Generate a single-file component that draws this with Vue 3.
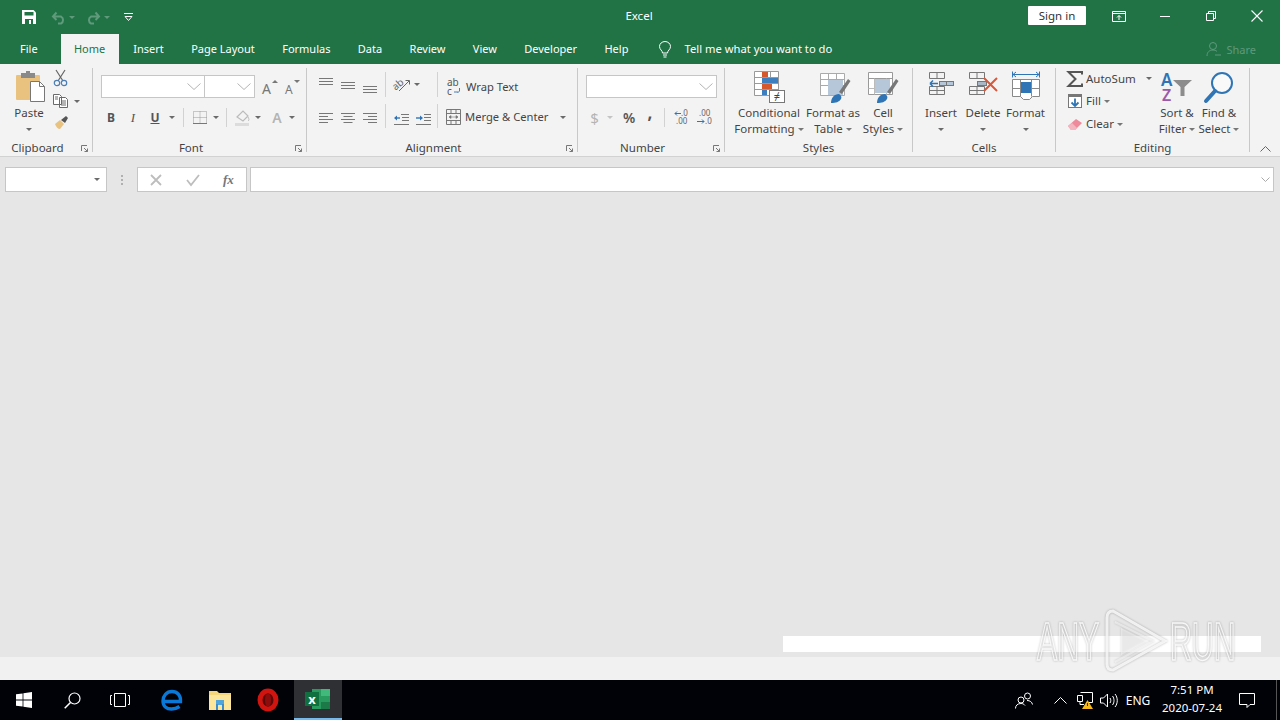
<script setup>
const tabs = ['Insert', 'Page Layout', 'Formulas', 'Data', 'Review', 'View', 'Developer', 'Help']
</script>

<template>
  <div class="app">
    <div class="titlebar">
      <div class="qat">
        <svg class="save" width="16" height="16" viewBox="0 0 16 16">
          <path d="M1 1h11.500L15 3.500V15H1z" fill="#fff" />
          <rect x="3.500" y="3" width="9" height="3.500" fill="#217346" />
          <rect x="4" y="10" width="8" height="5" fill="#217346" />
          <rect x="8" y="11" width="2" height="4" fill="#fff" />
        </svg>
        <svg class="undo" width="16" height="14" viewBox="0 0 16 14">
          <path d="M2 6.500h8a4 4 0 0 1 0 7H7M5.500 2.500 2 6.500l3.500 3.500" fill="none" stroke="#5f9a7b" stroke-width="2" />
        </svg>
        <i class="caret dim"></i>
        <svg class="redo" width="16" height="14" viewBox="0 0 16 14">
          <path d="M14 6.500H6a4 4 0 0 0 0 7h3M10.500 2.500 14 6.500 10.500 10" fill="none" stroke="#5f9a7b" stroke-width="2" />
        </svg>
        <i class="caret dim"></i>
        <svg class="custom" width="9" height="8" viewBox="0 0 9 8">
          <path d="M0 .5h9" stroke="#fff" />
          <path d="M1 3.500h7L4.500 7.500z" fill="none" stroke="#fff" />
        </svg>
      </div>
      <div class="doc-title">Excel</div>
      <div class="win-area">
        <button class="signin">Sign in</button>
        <div class="win-btns">
          <span class="win-btn">
            <svg width="14" height="11" viewBox="0 0 14 11"><path d="M.5.500h13v10H.5zM.5 2.500h13M7 9V4.500M5 6.500l2-2 2 2" fill="none" stroke="#fff" /></svg>
          </span>
          <span class="win-btn">
            <svg width="10" height="1" viewBox="0 0 10 1"><path d="M0 .5h10" stroke="#fff" /></svg>
          </span>
          <span class="win-btn">
            <svg width="10" height="10" viewBox="0 0 10 10"><path d="M.5 2.500h7v7h-7zM2.500 2.500v-2h7v7h-2" fill="none" stroke="#fff" /></svg>
          </span>
          <span class="win-btn">
            <svg width="12" height="12" viewBox="0 0 12 12"><path d="M.5.500l11 11M11.500.500l-11 11" fill="none" stroke="#fff" stroke-width="1.100" /></svg>
          </span>
        </div>
      </div>
    </div>

    <div class="tabbar">
      <span class="tab file">File</span>
      <span class="tab active">Home</span>
      <span v-for="t in tabs" :key="t" class="tab">{{ t }}</span>
      <svg class="bulb" width="14" height="17" viewBox="0 0 14 17">
        <path d="M4.500 12c0-2.500-3-3.500-3-6.500a5.500 5 0 0 1 11 0c0 3-3 4-3 6.500zM5 14h4M5.500 16h3" fill="none" stroke="#fff" />
      </svg>
      <span class="tell">Tell me what you want to do</span>
      <div class="share">
        <svg width="16" height="16" viewBox="0 0 16 16">
          <circle cx="7" cy="5" r="3.500" fill="none" stroke="#5f9a7b" />
          <path d="M1 15c0-4 2.500-6 6-6 1.500 0 3 .4 4 1.500M9 14h6" fill="none" stroke="#5f9a7b" />
        </svg>
        <span>Share</span>
      </div>
    </div>

    <div class="ribbon">
      <section class="group g-clip">
        <div class="body clip-body">
          <div class="big paste">
            <svg width="32" height="32" viewBox="0 0 32 32">
              <rect x="1" y="4" width="24" height="25" rx="1" fill="#e9c27f" />
              <rect x="6" y="2" width="14" height="5" fill="#8a8a8a" />
              <rect x="11" y="0" width="4" height="3" fill="#8a8a8a" />
              <path d="M15.500 10.500h9l5 5v15h-14z" fill="#fff" stroke="#777" />
              <path d="M24.500 10.500v5h5" fill="none" stroke="#777" />
            </svg>
            <span class="lbl">Paste</span>
            <span class="lbl"><i class="caret"></i></span>
          </div>
          <div class="clip-small">
            <svg width="16" height="17" viewBox="0 0 16 17">
              <path d="M3 0l7 11M12 0 5 11" stroke="#666" stroke-width="1.200" fill="none" />
              <circle cx="4" cy="13" r="2.700" fill="none" stroke="#4a7eb5" stroke-width="1.200" />
              <circle cx="11" cy="13" r="2.700" fill="none" stroke="#4a7eb5" stroke-width="1.200" />
            </svg>
            <div class="copy-row">
              <svg width="16" height="14" viewBox="0 0 16 14">
                <path d="M.5.500h6l2 2v8h-8zM6.500 3.500h6l2 2v8h-8z" fill="#fff" stroke="#6a6a6a" />
                <path d="M8 7h5M8 9h5M8 11h5M2 3h3M2 5h3" stroke="#6a6a6a" />
              </svg>
              <i class="caret"></i>
            </div>
            <svg width="16" height="15" viewBox="0 0 16 15">
              <path d="M2 9l5-4 4 4-4 5c-2 0-4-2-5-5z" fill="#e9c27f" />
              <path d="M8 5l5-4 2 2-3 5z" fill="#555" />
            </svg>
          </div>
        </div>
        <div class="foot"><span class="foot-label">Clipboard</span><span class="launch"><svg width="7" height="7" viewBox="0 0 7 7"><path d="M.5 6V.5H6M3 3l3.500 3.500M6.500 3.500v3h-3" fill="none" stroke="#777" /></svg></span></div>
      </section>

      <section class="group g-font">
        <div class="body stack">
          <div class="row-a">
            <div class="combo font-name"><svg class="chev" width="14" height="7" viewBox="0 0 14 7"><path d="M.5.500 7 6.500 13.500.500" fill="none" stroke="#b5b5b5" /></svg></div>
            <div class="combo font-size"><svg class="chev" width="14" height="7" viewBox="0 0 14 7"><path d="M.5.500 7 6.500 13.500.500" fill="none" stroke="#b5b5b5" /></svg></div>
            <svg class="grow-a" width="16" height="16" viewBox="0 0 16 16">
              <text x="0" y="15" class="glyph" font-size="14" fill="#777">A</text>
              <path d="M10 4l3-3 3 3z" fill="#777" />
            </svg>
            <svg class="shrink-a" width="16" height="16" viewBox="0 0 16 16">
              <text x="1" y="15" class="glyph" font-size="12" fill="#777">A</text>
              <path d="M10 1h6l-3 3z" fill="#777" />
            </svg>
          </div>
          <div class="row-b">
            <span class="ch bold">B</span>
            <span class="ch ital">I</span>
            <span class="ch under">U</span>
            <i class="caret slot12"></i>
            <i class="sep"></i>
            <svg width="22" height="19" viewBox="0 0 22 19">
              <path d="M4.500 3.500h13v12h-13zM11 3.500v12M4.500 9.500h13" fill="none" stroke="#999" stroke-dasharray="1 1" />
              <path d="M4 15.500h14" stroke="#777" />
            </svg>
            <i class="caret slot10"></i>
            <i class="sep"></i>
            <svg width="21" height="19" viewBox="0 0 21 19">
              <path d="M5 9l6-6 5 5-5 5z" fill="none" stroke="#bbb" stroke-width="1.200" />
              <path d="M16 9c1 2 1.500 3 0 4" fill="none" stroke="#bbb" />
              <rect x="3" y="15" width="14" height="3" fill="#dcdcdc" />
            </svg>
            <i class="caret slot10"></i>
            <span class="ch a-color">A</span>
            <i class="caret slot9"></i>
          </div>
        </div>
        <div class="foot"><span class="foot-label">Font</span><span class="launch"><svg width="7" height="7" viewBox="0 0 7 7"><path d="M.5 6V.5H6M3 3l3.500 3.500M6.500 3.500v3h-3" fill="none" stroke="#777" /></svg></span></div>
      </section>

      <section class="group g-align">
        <div class="body align-body">
          <div class="align-grid">
            <svg width="22" height="20" viewBox="0 0 22 20"><path d="M4 3.500h14M4 6.500h14M4 9.500h14" stroke="#777" /></svg>
            <svg width="22" height="20" viewBox="0 0 22 20"><path d="M4 7.500h14M4 10.500h14M4 13.500h14" stroke="#777" /></svg>
            <svg width="22" height="20" viewBox="0 0 22 20"><path d="M4 11.500h14M4 14.500h14M4 17.500h14" stroke="#777" /></svg>
            <svg width="22" height="20" viewBox="0 0 22 20"><path d="M4 5.500h14M4 8.500h9M4 11.500h14M4 14.500h9" stroke="#777" /></svg>
            <svg width="22" height="20" viewBox="0 0 22 20"><path d="M4 5.500h14M6.500 8.500h9M4 11.500h14M6.500 14.500h9" stroke="#777" /></svg>
            <svg width="22" height="20" viewBox="0 0 22 20"><path d="M4 5.500h14M9 8.500h9M4 11.500h14M9 14.500h9" stroke="#777" /></svg>
          </div>
          <i class="vsep"></i>
          <div class="align-mid">
            <div class="orient">
              <svg width="18" height="16" viewBox="0 0 18 16">
                <text x="0" y="12" class="glyph" font-size="10" fill="#666" transform="rotate(-40 5 10)">ab</text>
                <path d="M6 15 16 5M12.500 4.500h4v4" fill="none" stroke="#666" />
              </svg>
              <i class="caret"></i>
            </div>
            <div class="indents">
              <svg width="17" height="15" viewBox="0 0 17 15">
                <path d="M8 3.500h8M9 6.500h7M9 9.500h7M1 13.500h15" fill="none" stroke="#777" />
                <path d="M1 7l3-2.500v5z" fill="#2f75b5" /><path d="M2 7h5" stroke="#2f75b5" stroke-width="1.400" />
              </svg>
              <svg width="17" height="15" viewBox="0 0 17 15">
                <path d="M9 3.500h7M9 6.500h7M9 9.500h7M1 13.500h15" fill="none" stroke="#777" />
                <path d="M8 7 5 4.500v5z" fill="#2f75b5" /><path d="M1 7h5" stroke="#2f75b5" stroke-width="1.400" />
              </svg>
            </div>
          </div>
          <i class="vsep wide"></i>
          <div class="align-text">
            <div class="wrap-row">
              <svg width="14" height="18" viewBox="0 0 14 18">
                <text x="0" y="8" class="glyph" font-size="10" fill="#555">ab</text>
                <text x="0" y="17" class="glyph" font-size="10" fill="#555">c</text>
                <path d="M7 14h4M12.500 10v3l-2 2" fill="none" stroke="#4a7eb5" />
              </svg>
              <span class="lbl">Wrap Text</span>
            </div>
            <div class="merge-row">
              <svg width="15" height="16" viewBox="0 0 15 16">
                <path d="M.5.500h14v15H.5zM.5 4.500h14M.5 11.500h14M5 .5v4M10 .5v4M5 11.500v4M10 11.500v4" fill="none" stroke="#777" />
                <path d="M3 8h9M3 8l2-1.500v3zM12 8l-2-1.500v3z" fill="#777" stroke="#777" stroke-width=".6" />
              </svg>
              <span class="lbl">Merge &amp; Center</span>
              <i class="caret"></i>
            </div>
          </div>
        </div>
        <div class="foot"><span class="foot-label">Alignment</span><span class="launch"><svg width="7" height="7" viewBox="0 0 7 7"><path d="M.5 6V.5H6M3 3l3.500 3.500M6.500 3.500v3h-3" fill="none" stroke="#777" /></svg></span></div>
      </section>

      <section class="group g-number">
        <div class="body stack">
          <div class="row-a">
            <div class="combo num-format"><svg class="chev" width="14" height="7" viewBox="0 0 14 7"><path d="M.5.500 7 6.500 13.500.500" fill="none" stroke="#b5b5b5" /></svg></div>
          </div>
          <div class="row-b num-row">
            <span class="ch dollar">$</span>
            <i class="caret slot16 pale"></i>
            <span class="ch percent">%</span>
            <span class="ch comma">,</span>
            <i class="sep"></i>
            <svg width="22" height="19" viewBox="0 0 22 19">
              <text x="9" y="8" class="glyph" font-size="8" fill="#666">.0</text>
              <text x="4" y="16" class="glyph" font-size="8" fill="#666">.00</text>
              <path d="M3 5.500h6M3 5.500l2-2M3 5.500l2 2" fill="none" stroke="#2f75b5" />
            </svg>
            <svg width="22" height="19" viewBox="0 0 22 19">
              <text x="5" y="8" class="glyph" font-size="8" fill="#666">.00</text>
              <text x="11" y="16" class="glyph" font-size="8" fill="#666">.0</text>
              <path d="M3 13.500h7M10 13.500l-2-2M10 13.500l-2 2" fill="none" stroke="#2f75b5" />
            </svg>
          </div>
        </div>
        <div class="foot"><span class="foot-label">Number</span><span class="launch"><svg width="7" height="7" viewBox="0 0 7 7"><path d="M.5 6V.5H6M3 3l3.500 3.500M6.500 3.500v3h-3" fill="none" stroke="#777" /></svg></span></div>
      </section>

      <section class="group g-styles">
        <div class="body bigs">
          <div class="big w66">
            <svg width="32" height="32" viewBox="0 0 32 32">
              <path d="M1.500.500h24v24h-24zM9.500.500v24M17.500.500v24M1.500 6.500h24M1.500 12.500h24M1.500 18.500h24" fill="#fff" stroke="#999" />
              <rect x="9" y="1" width="6" height="5" fill="#d5572c" />
              <rect x="9" y="7" width="16" height="5" fill="#3d7ebf" />
              <rect x="9" y="13" width="10" height="5" fill="#d5572c" />
              <rect x="9" y="19" width="5" height="5" fill="#3d7ebf" />
              <rect x="16.500" y="19.500" width="15" height="12" fill="#fff" stroke="#777" />
              <text x="24" y="29" class="glyph" font-size="11" fill="#444" text-anchor="middle">≠</text>
            </svg>
            <span class="lbl">Conditional</span>
            <span class="lbl">Formatting<i class="caret ml"></i></span>
          </div>
          <div class="big w54">
            <svg class="nudge" width="32" height="32" viewBox="0 0 32 32">
              <path d="M1.500 2.500h24v22h-24zM9.500 2.500v22M17.500 2.500v22M1.500 8.500h24M1.500 14.500h24" fill="#fff" stroke="#aaa" />
              <rect x="9" y="9" width="15" height="15" fill="#b7c7da" />
              <path d="M20 21 29 8l2.500 2L23 23z" fill="#777" />
              <path d="M12 32c0-5 3-9 8-9 2 1 3 3 2 5-2 3-5 4-10 4z" fill="#2f75b5" />
            </svg>
            <span class="lbl">Format as</span>
            <span class="lbl">Table<i class="caret ml"></i></span>
          </div>
          <div class="big w42">
            <svg width="32" height="32" viewBox="0 0 32 32">
              <path d="M1.500 1.500h24v22h-24zM1.500 7.500h24" fill="#fff" stroke="#999" />
              <path d="M7.500 7.500v16M19.500 7.500v16M1.500 17.500h24" fill="none" stroke="#bbb" />
              <rect x="8" y="8" width="15" height="14" fill="#b7c7da" />
              <path d="M20 21 29 8l2.500 2L23 23z" fill="#777" />
              <path d="M10 32c0-5 3-9 8-9 2 1 3 3 2 5-2 3-5 4-10 4z" fill="#2f75b5" />
            </svg>
            <span class="lbl">Cell</span>
            <span class="lbl">Styles<i class="caret ml"></i></span>
          </div>
        </div>
        <div class="foot"><span class="foot-label">Styles</span></div>
      </section>

      <section class="group g-cells">
        <div class="body bigs">
          <div class="big w42">
            <svg width="32" height="32" viewBox="0 0 32 32">
              <path d="M4.500 1.500h15v6h-15zM12 1.500v6M4.500 23.500h15v-8h-15zM12 15.500v8M4.500 19.500h15" fill="none" stroke="#777" />
              <rect x="14.500" y="10.500" width="7" height="4" fill="#b7c7da" stroke="#777" />
              <rect x="21.500" y="10.500" width="7" height="4" fill="#b7c7da" stroke="#777" />
              <path d="M5 12.500h8M5 12.500l3-3M5 12.500l3 3" fill="none" stroke="#2f75b5" stroke-width="1.500" />
            </svg>
            <span class="lbl">Insert</span>
            <span class="lbl"><i class="caret"></i></span>
          </div>
          <div class="big w42">
            <svg width="32" height="32" viewBox="0 0 32 32">
              <path d="M2.500 1.500h15v6h-15zM10 1.500v6M2.500 23.500h15v-8h-15zM10 15.500v8M2.500 19.500h15" fill="none" stroke="#777" />
              <rect x="10.500" y="10.500" width="9" height="4" fill="#a9b7c7" stroke="#777" />
              <path d="M17 7l13 13M30 7 17 20" stroke="#d9573b" stroke-width="2" />
            </svg>
            <span class="lbl">Delete</span>
            <span class="lbl"><i class="caret"></i></span>
          </div>
          <div class="big w43">
            <svg width="32" height="32" viewBox="0 0 32 32">
              <path d="M3 3.500h26M3 3.500l3-2.500M3 3.500 6 6M29 3.500 26 1M29 3.500 26 6M2.500 .5v6M29.500 .5v6" fill="none" stroke="#2f75b5" />
              <path d="M2.500 8.500h27v17l-7 0-3 3h-6l-3-3h-8zM10.500 8.500v17M21.500 8.500v17M2.500 17.500h27" fill="#fff" stroke="#888" />
              <rect x="11" y="11" width="10" height="11" fill="#2f75b5" />
            </svg>
            <span class="lbl">Format</span>
            <span class="lbl"><i class="caret"></i></span>
          </div>
        </div>
        <div class="foot"><span class="foot-label">Cells</span></div>
      </section>

      <section class="group g-edit">
        <div class="body bigs">
          <div class="edit-small">
            <div class="edit-row">
              <svg width="16" height="16" viewBox="0 0 16 16"><path d="M15 3.500V1H1.500l7 7-7 7H15v-2.500" fill="none" stroke="#555" stroke-width="2" /></svg>
              <span class="lbl">AutoSum</span>
              <i class="caret sum-caret"></i>
            </div>
            <div class="edit-row">
              <svg width="16" height="16" viewBox="0 0 16 16">
                <rect x="1.500" y="1.500" width="13" height="13" fill="#fff" stroke="#777" />
                <rect x="1" y="1" width="14" height="3" fill="#777" />
                <path d="M8 5.500V13M4.500 9.500 8 13l3.500-3.500" fill="none" stroke="#2f75b5" stroke-width="1.800" />
              </svg>
              <span class="lbl">Fill<i class="caret ml"></i></span>
            </div>
            <div class="edit-row">
              <svg width="16" height="16" viewBox="0 0 16 16">
                <path d="M1 10l8-7 6 4-7 7H4z" fill="#ef8a9a" />
                <path d="M1 10l3 4h4l2-2-5-5z" fill="#f3b6c0" />
              </svg>
              <span class="lbl">Clear<i class="caret ml"></i></span>
            </div>
          </div>
          <div class="big w42">
            <svg width="32" height="32" viewBox="0 0 32 32">
              <text x="0" y="15" class="glyph" font-size="17" font-weight="600" fill="#2f75b5">A</text>
              <text x="1" y="30" class="glyph" font-size="16" font-weight="600" fill="#9b59a8">Z</text>
              <path d="M12 9h19l-7.500 7v9h-4v-9z" fill="#8c8c8c" />
            </svg>
            <span class="lbl">Sort &amp;</span>
            <span class="lbl">Filter<i class="caret ml"></i></span>
          </div>
          <div class="big w42">
            <svg width="32" height="32" viewBox="0 0 32 32">
              <circle cx="19" cy="12" r="10" fill="#fff" fill-opacity=".5" stroke="#2f75b5" stroke-width="2" />
              <path d="M3 30 12 20" stroke="#2f75b5" stroke-width="4" stroke-linecap="round" />
            </svg>
            <span class="lbl">Find &amp;</span>
            <span class="lbl">Select<i class="caret ml"></i></span>
          </div>
        </div>
        <div class="foot"><span class="foot-label">Editing</span></div>
      </section>

      <div class="collapse">
        <svg width="11" height="6" viewBox="0 0 11 6"><path d="M.5 5.500l5-5 5 5" fill="none" stroke="#666" /></svg>
      </div>
    </div>

    <div class="formula-bar">
      <div class="namebox"><i class="caret"></i></div>
      <svg class="grip" width="3" height="11" viewBox="0 0 3 11"><path d="M0 1h2v2H0zM0 5h2v2H0zM0 9h2v2H0z" fill="#b0b0b0" /></svg>
      <div class="fx-btns">
        <svg width="12" height="12" viewBox="0 0 12 12"><path d="M1 1l10 10M11 1 1 11" stroke="#bdbdbd" stroke-width="1.800" /></svg>
        <svg width="14" height="12" viewBox="0 0 14 12"><path d="M1 6l4 5 8-10" fill="none" stroke="#bdbdbd" stroke-width="1.800" /></svg>
        <span class="fx">fx</span>
      </div>
      <div class="fx-input">
        <svg width="9" height="5" viewBox="0 0 9 5"><path d="M.5.500l4 4 4-4" fill="none" stroke="#aaa" /></svg>
      </div>
    </div>

    <main class="grid-area"></main>
    <div class="statusbar"></div>

    <footer class="taskbar">
      <span class="task">
        <svg width="16" height="16" viewBox="0 0 16 16"><path d="M0 2.300 6.600 1.400v6.200H0zM7.400 1.300 16 0v7.600H7.400zM0 8.400h6.600v6.200L0 13.700zM7.400 8.400H16V16l-8.600-1.300z" fill="#fff" /></svg>
      </span>
      <span class="task">
        <svg width="17" height="17" viewBox="0 0 17 17"><circle cx="10.500" cy="6.500" r="5.500" fill="none" stroke="#fff" stroke-width="1.200" /><path d="M6.500 10.500.7 16.300" stroke="#fff" stroke-width="1.500" /></svg>
      </span>
      <span class="task">
        <svg width="20" height="14" viewBox="0 0 20 14"><path d="M4.500.500h11v13h-11zM2 2.500H.5v9H2M18 2.500h1.500v9H18" fill="none" stroke="#fff" /></svg>
      </span>
      <span class="task pin first-pin">
        <svg width="22" height="22" viewBox="0 0 22 22">
          <path d="M3 12.500h16.500C20 6 16 2.500 11 2.500 5.500 2.500 2 7 2 12c0 5 3.500 8 8.500 8 3 0 5.500-.8 8-2.500" fill="none" stroke="#0a78d7" stroke-width="3.400" />
        </svg>
      </span>
      <span class="task pin">
        <svg width="22" height="20" viewBox="0 0 22 20">
          <path d="M0 1h8l2 2h12v17H0z" fill="#f6d67a" />
          <rect x="0" y="5" width="22" height="15" fill="#fbe69c" />
          <rect x="7" y="10" width="8" height="5" fill="#50a6dc" />
          <rect x="7" y="14" width="2" height="6" fill="#3c8ccb" />
          <rect x="13" y="14" width="2" height="6" fill="#3c8ccb" />
        </svg>
      </span>
      <span class="task pin">
        <svg width="22" height="22" viewBox="0 0 22 22">
          <ellipse cx="11" cy="11" rx="8" ry="9" fill="#5a0808" stroke="#d0140f" stroke-width="5" />
          <ellipse cx="11" cy="11" rx="3" ry="7" fill="#8e0c0c" />
        </svg>
      </span>
      <span class="task current">
        <svg width="26" height="22" viewBox="0 0 26 22">
          <rect x="7" y="1" width="18" height="20" fill="#2a9b5f" />
          <rect x="16" y="1" width="9" height="7" fill="#41b97a" />
          <rect x="16" y="14" width="9" height="7" fill="#1c7a48" />
          <rect x="0" y="4" width="14" height="14" fill="#107040" />
          <text x="7" y="15.500" class="glyph" font-size="13" font-weight="700" fill="#fff" text-anchor="middle">x</text>
        </svg>
      </span>
      <div class="tray">
        <svg class="t-people" width="18" height="17" viewBox="0 0 18 17">
          <circle cx="6" cy="8" r="3" fill="none" stroke="#fff" />
          <circle cx="12.500" cy="4" r="3" fill="none" stroke="#fff" />
          <path d="M.5 16.500c0-3 2-5 5.500-5 1.500 0 3 .5 4 2M12 8.500c3 0 5 1.500 5.500 4" fill="none" stroke="#fff" />
        </svg>
        <svg class="t-chev" width="13" height="7" viewBox="0 0 13 7"><path d="M.5 6.500l6-6 6 6" fill="none" stroke="#fff" /></svg>
        <svg class="t-net" width="16" height="17" viewBox="0 0 16 17">
          <path d="M3.500.500h12v10H9M.5 3.500h5v6h-5zM3 9.500v3h4" fill="none" stroke="#fff" />
          <path d="M10.500 8 16 17H5z" fill="#f4b81c" />
          <path d="M10.500 11v3" stroke="#333" />
        </svg>
        <svg class="t-vol" width="17" height="15" viewBox="0 0 17 15">
          <path d="M.5 5h3l4-4v13l-4-4h-3z" fill="none" stroke="#fff" />
          <path d="M10 5c1 1.500 1 3.500 0 5M12.500 3c2 2.500 2 6.500 0 9M15 1c3 3.500 3 9.500 0 13" fill="none" stroke="#fff" />
        </svg>
        <span class="eng">ENG</span>
        <div class="clock"><span>7:51 PM</span><span>2020-07-24</span></div>
        <svg class="t-note" width="16" height="15" viewBox="0 0 16 15"><path d="M.5.500h15v11h-4.500L8 14.500V11.500H.5z" fill="none" stroke="#fff" /></svg>
        <i class="desk"></i>
      </div>
    </footer>

    <div class="white-strip"></div>
    <div class="watermark">
      <span class="wm-text">ANY</span>
      <svg class="wm-play" width="66" height="66" viewBox="0 0 66 66">
        <path d="M10 3 62 33 10 62C6 62 4 60 4 56V10C4 5 6 3 10 3z" fill="none" stroke="#fff" stroke-opacity=".8" stroke-width="3" />
        <path d="M18 20 44 33 18 47z" fill="#fff" fill-opacity=".45" />
        <path d="M12 14 50 33 12 54" fill="none" stroke="#fff" stroke-opacity=".5" stroke-width="2" />
      </svg>
      <span class="wm-text wm-run">RUN</span>
    </div>
  </div>
</template>

<style>
html, body { margin: 0; background: #e6e6e6; }
</style>

<style scoped>
.app {
  position: relative;
  width: 1280px;
  height: 720px;
  overflow: hidden;
  display: flex;
  flex-direction: column;
  font-family: "Noto Sans", "Liberation Sans", sans-serif;
  font-size: 11.5px;
  color: #444;
  background: #e6e6e6;
}
svg { display: block; flex: none; overflow: visible; }
.glyph { font-family: "Noto Sans", sans-serif; }

.caret {
  display: inline-block;
  width: 0;
  height: 0;
  border-left: 3px solid transparent;
  border-right: 3px solid transparent;
  border-top: 3px solid #6a6a6a;
  vertical-align: middle;
  flex: none;
}
.caret.dim { border-top-color: #5f9a7b; }
.caret.pale { border-top-color: #c4c4c4; }
.caret.ml { margin-left: 3px; border-top-color: #777; }

.titlebar {
  height: 34px;
  background: #217346;
  color: #fff;
  display: grid;
  grid-template-columns: 1fr auto 1fr;
  align-items: center;
}
.qat { display: flex; align-items: center; padding-left: 21px; }
.undo { margin-left: 14px; }
.undo + .caret { margin-left: 2px; }
.redo { margin-left: 10px; }
.redo + .caret { margin-left: 3px; }
.custom { margin-left: 14px; }
.doc-title { font-size: 11.5px; margin-left: -2px; margin-top: -3px; }
.win-area { display: flex; align-items: flex-start; justify-content: flex-end; height: 34px; }
.signin {
  margin: 6px 10px 0 0;
  width: 58px;
  height: 19px;
  border: none;
  border-radius: 1px;
  background: #fff;
  color: #333;
  font: 11.5px "Noto Sans", sans-serif;
  padding: 0;
}
.win-btn {
  width: 46px;
  height: 32px;
  display: inline-flex;
  align-items: center;
  justify-content: center;
}
.win-btns { display: flex; }

.tabbar {
  height: 30px;
  background: #217346;
  color: #fff;
  display: flex;
  align-items: center;
  font-size: 11px;
}
.tab { padding: 0 13.7px; height: 30px; line-height: 29px; }
.tab.file { padding: 0 23px 0 20px; }
.tab.active { background: #f3f3f3; color: #217346; width: 58px; padding: 0; text-align: center; margin-right: 1px; }
.bulb { margin-left: 16px; }
.tell { margin-left: 12.5px; font-size: 11.2px; padding-bottom: 1px; }
.share { margin-left: auto; margin-right: 24px; display: flex; align-items: center; gap: 4px; color: #5f9a7b; }

.ribbon {
  height: 88px;
  padding-top: 4px;
  background: #f3f3f3;
  border-bottom: 1px solid #d2d2d2;
  display: flex;
  align-items: flex-start;
  flex: none;
}
.group {
  height: 84px;
  border-right: 1px solid #c8c8c8;
  box-sizing: border-box;
  display: flex;
  flex-direction: column;
}
.g-clip { width: 93px; }
.g-font { width: 214px; }
.g-align { width: 271px; }
.g-number { width: 147px; }
.g-styles { width: 188px; }
.g-cells { width: 143px; }
.g-edit { width: 194px; }
.body { height: 68px; box-sizing: border-box; }
.foot { height: 16px; line-height: 24px; display: flex; color: #444; }
.foot-label { flex: 1; text-align: center; }
.launch { width: 17px; box-sizing: border-box; display: flex; padding: 9px 0 0 6px; height: 16px; }
.lbl { display: block; line-height: 16px; white-space: nowrap; text-align: center; }

.big { display: flex; flex-direction: column; align-items: center; padding-top: 3px; }
.big svg { margin-bottom: 2px; }
.paste { width: 34px; }
.paste svg { margin-left: 3px; }
.w42 { width: 42px; }
.w43 { width: 43px; }
.w54 { width: 54px; margin: 0 2px 0 4px; }
.w66 { width: 66px; }
.big .nudge { margin-left: 3px; }
.bigs { display: flex; }
.g-styles .bigs { padding-left: 11px; }
.g-cells .bigs { padding-left: 7px; }
.g-edit .bigs { padding-left: 11px; }

.clip-body { display: flex; padding-left: 12px; }
.clip-small { margin-left: 7px; padding-top: 2px; display: flex; flex-direction: column; gap: 7px; }
.copy-row { display: flex; align-items: center; gap: 5px; }

.stack { display: flex; flex-direction: column; padding: 7px 0 0 8px; }
.row-a { display: flex; align-items: center; height: 23px; }
.row-b { display: flex; align-items: center; height: 19px; margin-top: 10px; }
.combo {
  height: 21px;
  background: #fff;
  border: 1px solid #c6c6c6;
  display: flex;
  align-items: center;
  justify-content: flex-end;
  padding-right: 3px;
}
.font-name { width: 99px; }
.font-size { width: 46px; margin-left: -1px; }
.num-format { width: 126px; }
.grow-a { margin-left: 7px; }
.shrink-a { margin-left: 6px; }
.ch { text-align: center; font-size: 12px; width: 22px; color: #555; flex: none; }
.bold { font-weight: 700; }
.ital { font-style: italic; font-family: "Liberation Serif", serif; font-size: 13px; }
.under { text-decoration: underline; font-weight: 700; }
.a-color { color: #b4b4b4; font-size: 14px; margin-left: 3px; font-weight: 600; }
.slot12 { margin: 0 3px; }
.slot10 { margin: 0 2px; }
.slot9 { margin: 0 2px 0 1px; }
.slot16 { margin: 0 5px; }
.sep { width: 1px; height: 19px; background: #d2d2d2; margin: 0 5px; flex: none; }
.row-b .ch:first-child { margin-left: -1px; }

.align-body { display: flex; padding: 7px 0 0 8px; }
.align-grid {
  display: grid;
  grid-template-columns: repeat(3, 22px);
  grid-template-rows: 20px 20px;
  row-gap: 13px;
  width: 66px;
}
.vsep {
  width: 1px;
  height: 56px;
  margin: -3px 7px 0 4px;
  flex: none;
  background: linear-gradient(#d2d2d2 0 25px, transparent 25px 32px, #d2d2d2 32px);
}
.vsep.wide { margin: -3px 8px 0 6px; }
.align-mid { width: 38px; display: flex; flex-direction: column; }
.orient { display: flex; align-items: center; gap: 3px; margin-top: 1px; }
.indents { display: flex; gap: 5px; margin-top: 19px; }
.align-text { display: flex; flex-direction: column; }
.align-text .lbl { font-size: 11.2px; }
.wrap-row { display: flex; align-items: center; height: 26px; gap: 5px; padding-left: 1px; margin-top: -1px; }
.merge-row { display: flex; align-items: center; height: 26px; gap: 4px; margin-top: 4px; }
.merge-row .caret { margin-left: 8px; }

.num-row .dollar { color: #b4b4b4; font-size: 15px; margin-left: 4px; width: 19px; }
.num-row .caret.slot16 { margin: 0 5px 0 3px; }
.num-row .percent { font-size: 14px; font-weight: 600; width: 20px; margin-left: 1px; }
.num-row .comma { font-size: 17px; font-weight: 700; line-height: 12px; width: 20px; margin: -9px 0 0 1px; }
.num-row .sep { margin: 0 7px 0 4px; }

.edit-small { width: 89px; display: flex; flex-direction: column; }
.edit-row { display: flex; align-items: center; height: 23px; gap: 3px; }
.edit-row:first-child { height: 21px; }
.sum-caret { margin-left: 7px; }

.collapse { flex: 1; height: 84px; display: flex; align-items: flex-end; justify-content: center; box-sizing: border-box; }

.formula-bar {
  height: 36px;
  flex: none;
  display: flex;
  align-items: center;
  padding-top: 9px;
  box-sizing: border-box;
  background: #e6e6e6;
}
.namebox, .fx-btns, .fx-input {
  height: 25px;
  box-sizing: border-box;
  background: #fff;
  border: 1px solid #c6c6c6;
  display: flex;
  align-items: center;
}
.namebox { width: 102px; margin-left: 5px; justify-content: flex-end; padding-right: 6px; }
.grip { margin: 0 13px 0 14px; }
.fx-btns { width: 110px; gap: 24px; padding-left: 12px; }
.fx { font: italic 700 13px "Liberation Serif", serif; color: #777; margin-left: -1px; }
.fx-input { width: 1024px; margin-left: 3px; justify-content: flex-end; padding-right: 3px; }

.grid-area { flex: 1; background: #e6e6e6; }
.statusbar { height: 23px; background: #f1f1f1; flex: none; }

.taskbar {
  height: 40px;
  flex: none;
  background: #000208;
  display: flex;
  align-items: center;
}
.task {
  width: 48px;
  height: 40px;
  display: flex;
  align-items: center;
  justify-content: center;
  box-sizing: border-box;
}
.task.pin { padding-right: 4px; }
.task.first-pin { margin-left: 6px; }
.task.current { background: #2f3033; border-bottom: 2px solid #76b9ed; }
.tray { margin-left: auto; display: flex; align-items: center; height: 40px; color: #fff; }
.t-people { margin-right: 21px; }
.t-chev { margin-right: 10px; }
.t-net { margin-right: 7px; }
.t-vol { margin-right: 8px; }
.eng { width: 26px; margin-right: 11px; font-size: 12px; text-align: center; }
.clock { width: 60px; display: flex; flex-direction: column; align-items: center; line-height: 18px; font-size: 11.5px; margin-right: 17px; white-space: nowrap; padding-bottom: 2px; }
.t-note { margin-right: 21px; }
.desk { width: 1px; height: 40px; background: #555; margin-right: 3px; }

.white-strip {
  position: absolute;
  left: 783px;
  top: 636px;
  width: 478px;
  height: 16px;
  background: #fff;
}
.watermark {
  position: absolute;
  left: 1037px;
  top: 608px;
  display: flex;
  align-items: center;
  height: 66px;
  filter: drop-shadow(0 0 1px rgba(0, 0, 0, .35));
}
.wm-text {
  font: 400 54px "Liberation Sans", sans-serif;
  color: rgba(255, 255, 255, .1);
  -webkit-text-stroke: 1.5px rgba(255, 255, 255, .85);
  transform: scaleX(.56);
  transform-origin: left center;
  width: 66px;
  display: block;
  white-space: nowrap;
}
.wm-run { margin-left: 1px; }
</style>
